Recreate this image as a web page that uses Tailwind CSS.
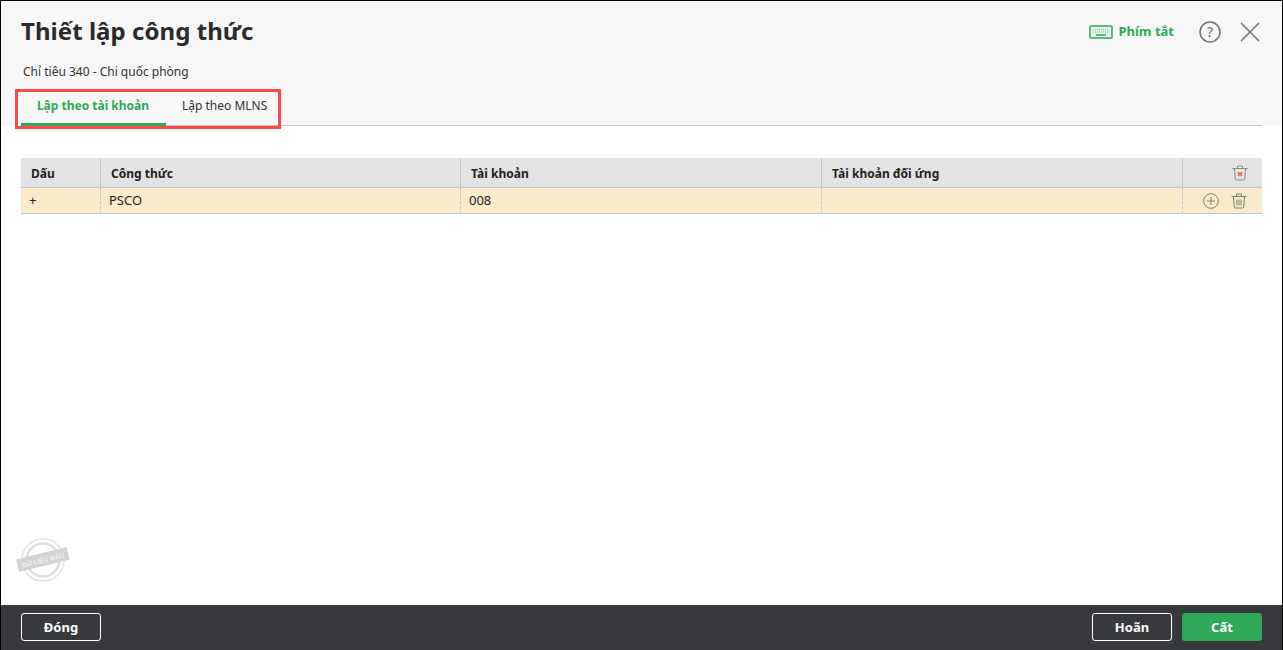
<!DOCTYPE html>
<html lang="en">
<head>
  <meta charset="UTF-8">
  <title>Thiết lập công thức</title>
  <script src="https://cdn.jsdelivr.net/npm/@tailwindcss/browser@4"></script>
</head>
<body class="font-['Noto_Sans',sans-serif] text-[#212121] bg-white overflow-hidden">
  <div class="relative h-[650px] w-[1283px] flex flex-col border-t border-l border-r border-black">
    <!-- header -->
    <div class="bg-[#f7f7f7] h-[125px] shrink-0 px-5 relative">
      <div class="flex items-center justify-between h-[61px]">
        <h1 class="text-[24px] font-bold leading-[60px] tracking-[0.05px] text-[#2b2b2b] mb-[2px]">Thiết lập công thức</h1>
        <div class="flex items-center pr-[2px]">
          <svg width="24" height="14" viewBox="0 0 24 14" class="mr-[5px]">
            <rect x="1" y="1" width="22" height="12" rx="1" fill="#eaf6ee" stroke="#5dbb7a" stroke-width="2"/>
            <path d="M4 4.5h16M4 7h16" stroke="#8fd0a4" stroke-width="1.3" stroke-dasharray="1.2 0.8"/>
            <rect x="7" y="9" width="10" height="2" fill="#5dbb7a"/>
          </svg>
          <span class="text-[13px] font-bold text-[#2fa85a] mr-[25px]">Phím tắt</span>
          <svg width="22" height="22" viewBox="0 0 22 22" class="mr-[19px]">
            <circle cx="11" cy="11" r="10" fill="none" stroke="#6f6f6f" stroke-width="1.5"/>
            <text x="11" y="16" text-anchor="middle" font-size="14" fill="#6f6f6f" font-family="Noto Sans">?</text>
          </svg>
          <svg width="20" height="20" viewBox="0 0 20 20">
            <path d="M1 1l18 18M19 1L1 19" stroke="#6f6f6f" stroke-width="1.5" fill="none"/>
          </svg>
        </div>
      </div>
      <p class="text-[12px] leading-[18px] pl-[2px] mt-[1px] text-[#333]">Chỉ tiêu 340 - Chi quốc phòng</p>
      <div class="absolute left-5 right-5 bottom-0 h-px bg-[#c4c6d0]"></div>
      <div class="absolute left-5 bottom-0 flex h-[36px] text-[12px]">
        <div class="w-[145px] flex justify-center pt-[7px] pr-[1px] border-b-[3px] border-[#2fa85a] font-bold text-[#2fa85a]">Lập theo tài khoản</div>
        <div class="pl-[16px] pt-[7px] text-[#333]">Lập theo MLNS</div>
      </div>
    </div>
    <!-- red highlight -->
    <div class="absolute z-10 left-[14px] top-[88px] w-[266px] h-[40px] border-[3px] border-[#ff4747]"></div>

    <!-- table -->
    <div class="flex-1 bg-white px-5 pt-8 relative">
      <div class="grid grid-cols-[80px_360px_361px_361px_79px] w-[1241px] text-[12px]">
        <div class="bg-[#e3e3e3] h-[30px] border-b border-r border-[#c4c6d0] pl-[10px] pt-[2px] flex items-center font-bold">Dấu</div>
        <div class="bg-[#e3e3e3] h-[30px] border-b border-r border-[#c4c6d0] pl-[10px] pt-[2px] flex items-center font-bold">Công thức</div>
        <div class="bg-[#e3e3e3] h-[30px] border-b border-r border-[#c4c6d0] pl-[10px] pt-[2px] flex items-center font-bold">Tài khoản</div>
        <div class="bg-[#e3e3e3] h-[30px] border-b border-r border-[#c4c6d0] pl-[10px] pt-[2px] flex items-center font-bold">Tài khoản đối ứng</div>
        <div class="bg-[#e3e3e3] h-[30px] border-b border-[#c4c6d0] flex items-center justify-end pr-[14px]">
          <svg width="16" height="16" viewBox="0 0 16 16" fill="none" stroke="#8a8a8a" stroke-width="1">
            <path d="M0.5 3.5h15M5.5 3.5V1h5v2.5M2.5 3.5l.8 10.5a1 1 0 0 0 1 1h7.4a1 1 0 0 0 1-1l.8-10.5"/>
            <path d="M6 7l4 4M10 7l-4 4" stroke="#f04b4b" stroke-width="1.4"/>
          </svg>
        </div>
        <div class="bg-[#f9ebca] h-[26px] border-b border-[#c4c6d0] pl-[8px] flex items-center text-[13px] border-r [border-right-style:dashed]">+</div>
        <div class="bg-[#f9ebca] h-[26px] border-b border-[#c4c6d0] pl-[8px] flex items-center text-[13px] border-r [border-right-style:dashed]">PSCO</div>
        <div class="bg-[#f9ebca] h-[26px] border-b border-[#c4c6d0] pl-[8px] flex items-center text-[13px] border-r [border-right-style:dashed]">008</div>
        <div class="bg-[#f9ebca] h-[26px] border-b border-[#c4c6d0] pl-[8px] flex items-center text-[13px] border-r [border-right-style:dashed]"></div>
        <div class="bg-[#f9ebca] h-[26px] border-b border-[#c4c6d0] flex items-center justify-end pr-[15px] gap-[12px]">
          <svg width="16" height="16" viewBox="0 0 16 16" fill="none" stroke="#7f7f72" stroke-width="1">
            <circle cx="8" cy="8" r="7.3"/>
            <path d="M8 4v8M4 8h8"/>
          </svg>
          <svg width="16" height="16" viewBox="0 0 16 16" fill="none" stroke="#7f7f72" stroke-width="1">
            <path d="M0.5 3.5h15M5.5 3.5V1h5v2.5M2.5 3.5l.8 10.5a1 1 0 0 0 1 1h7.4a1 1 0 0 0 1-1l.8-10.5M6 6.5v6M8 6.5v6M10 6.5v6"/>
          </svg>
        </div>
      </div>
      <!-- stamp -->
      <svg class="absolute left-[15px] top-[411px] overflow-visible" width="54" height="46" viewBox="0 0 54 46">
        <circle cx="27" cy="23" r="21" fill="none" stroke="#e4e4e4" stroke-width="1.5"/>
        <circle cx="27" cy="23" r="16.5" fill="none" stroke="#dedede" stroke-width="2.5"/>
        <g transform="rotate(-14 27 23)">
          <rect x="1" y="16" width="52" height="13" fill="#d2d2d2"/>
          <text x="27" y="25.5" text-anchor="middle" font-size="6.5" font-weight="700" fill="#f0f0f0" font-family="Liberation Sans">DỮ LIỆU MẪU</text>
        </g>
      </svg>
    </div>

    <!-- footer -->
    <div class="bg-[#38393d] h-[45px] shrink-0 px-5 pb-[1px] flex items-center justify-between">
      <button class="w-[80px] h-[28px] pt-[2px] border border-white rounded-[3px] text-white text-[13px] font-bold">Đóng</button>
      <div class="flex gap-[10px]">
        <button class="w-[80px] h-[28px] pt-[2px] border border-white rounded-[3px] text-white text-[13px] font-bold">Hoãn</button>
        <button class="w-[80px] h-[28px] pt-[2px] bg-[#2fa85a] rounded-[3px] text-white text-[13px] font-bold">Cất</button>
      </div>
    </div>
  </div>
</body>
</html>
